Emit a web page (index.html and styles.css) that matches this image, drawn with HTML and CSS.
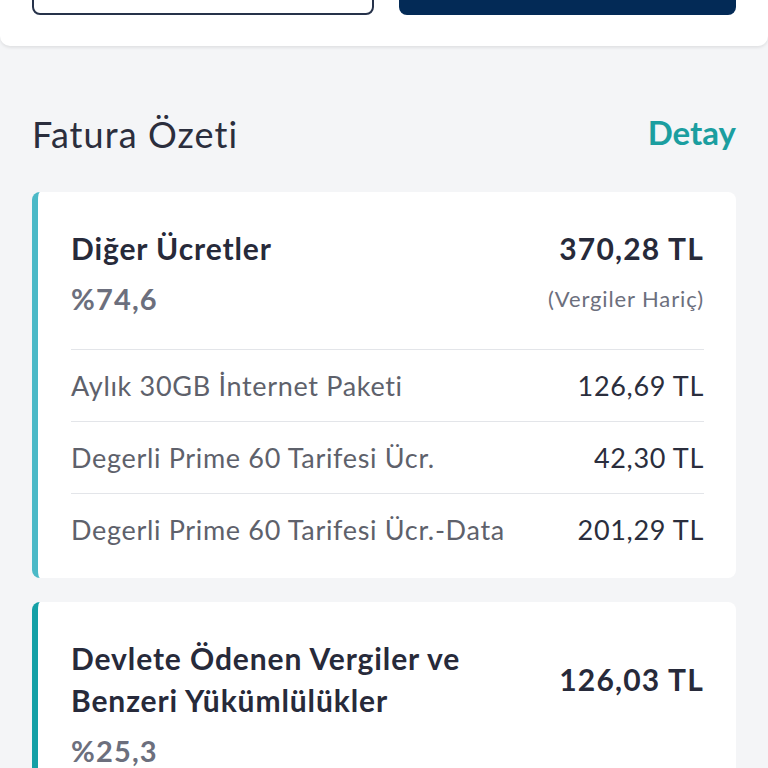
FILE: index.html
```html
<!DOCTYPE html>
<html lang="tr">

<head>
    <meta charset="utf-8">
    <meta name="viewport" content="width=device-width, initial-scale=1.0">
    <title>Fatura Özeti</title>
    <link rel="stylesheet" href="styles.css">
</head>

<body>
    <header class="knapper">
        <button class="knap knap-kontur"></button>
        <button class="knap knap-fyldt"></button>
    </header>

    <main class="indhold">
        <div class="overskrift">
            <h1>Fatura Özeti</h1>
            <a href="#" class="detay">Detay</a>
        </div>

        <article class="kort kort-lys">
            <div class="kort-top">
                <h2 class="navn">Diğer Ücretler</h2>
                <span class="belob">370,28 TL</span>
            </div>
            <div class="kort-under">
                <span class="procent">%74,6</span>
                <span class="note">(Vergiler Hariç)</span>
            </div>
            <ul class="linjer">
                <li><span>Aylık 30GB İnternet Paketi</span><span class="pris">126,69 TL</span></li>
                <li><span>Degerli Prime 60 Tarifesi Ücr.</span><span class="pris">42,30 TL</span></li>
                <li><span>Degerli Prime 60 Tarifesi Ücr.-Data</span><span class="pris">201,29 TL</span></li>
            </ul>
        </article>

        <article class="kort kort-mork">
            <div class="kort-top">
                <h2 class="navn">Devlete Ödenen Vergiler ve<br>Benzeri Yükümlülükler</h2>
                <span class="belob">126,03 TL</span>
            </div>
            <div class="kort-under">
                <span class="procent">%25,3</span>
            </div>
        </article>
    </main>
</body>

</html>
```

FILE: styles.css
```css
* {
    margin: 0;
    padding: 0;
    box-sizing: border-box;
}

body {
    background-color: #f4f5f7;
    font-family: 'Lato', 'Open Sans', sans-serif;
    color: #2b2e3d;
    overflow: hidden;
}

.knapper {
    display: flex;
    gap: 25px;
    margin-top: -34px;
    padding: 0 32px 31px 32px;
    background-color: #ffffff;
    box-shadow: 0px 2px 3px rgba(0, 0, 0, 0.08);
    border-radius: 0 0 10px 10px;
}

.knap {
    flex: 1;
    height: 49px;
    border-radius: 8px;
    border: none;
}

.knap-kontur {
    background-color: #ffffff;
    border: 2px solid #26324a;
}

.knap-fyldt {
    background-color: #032a56;
}

.indhold {
    padding: 0 32px;
}

.overskrift {
    display: flex;
    justify-content: space-between;
    align-items: center;
    height: 80px;
    margin-top: 48px;
    margin-bottom: 18px;
}

h1 {
    font-size: 36px;
    font-weight: normal;
    letter-spacing: 0.03em;
    color: #2b2e3d;
}

.detay {
    font-size: 33px;
    font-weight: bold;
    color: #1b9ea0;
    text-decoration: none;
    margin-top: -4px;
}

.kort {
    background-color: #ffffff;
    border-radius: 8px;
    border-left: 6px solid #4bb9c7;
    padding: 35px 32px 13px 33px;
    margin-bottom: 24px;
}

.kort-mork {
    border-left-color: #14a0a6;
}

.kort-top {
    display: flex;
    justify-content: space-between;
    align-items: center;
}

.navn {
    font-size: 30px;
    font-weight: bold;
    line-height: 42px;
    letter-spacing: 0.03em;
    color: #272a3a;
}

.belob {
    font-size: 30px;
    font-weight: bold;
    letter-spacing: 0.04em;
    color: #272a3a;
}

.kort-under {
    display: flex;
    justify-content: space-between;
    align-items: center;
    height: 40px;
    margin-top: 9px;
}

.procent {
    font-size: 29px;
    font-weight: bold;
    letter-spacing: 0.04em;
    color: #6c6f7d;
}

.note {
    font-size: 22px;
    letter-spacing: 0.04em;
    color: #6c6f7d;
}

.linjer {
    list-style: none;
    margin-top: 31px;
}

.linjer li {
    display: flex;
    justify-content: space-between;
    align-items: center;
    height: 72px;
    border-top: 1px solid #e3e5e9;
    font-size: 27px;
    letter-spacing: 0.025em;
    color: #5e616b;
}

.linjer .pris {
    color: #2b2e3d;
}
```
